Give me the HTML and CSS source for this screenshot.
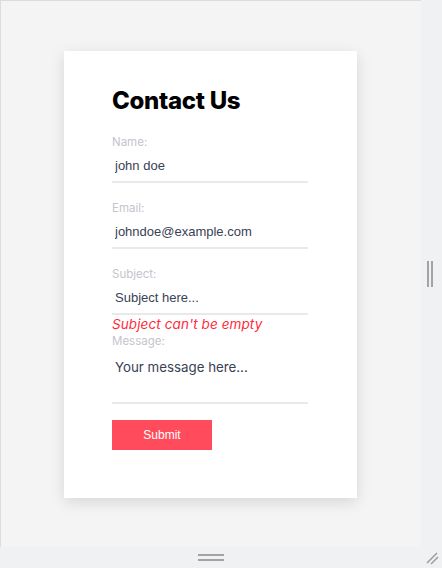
FILE: index.html
```html
<!DOCTYPE html>
<html>
<head>
<meta charset="utf-8">
<link rel="stylesheet" href="styles.css">
</head>
<body>
<div class="frame">
  <div class="viewport">
    <form class="card">
      <h1 class="title">Contact Us</h1>
      <div class="field">
        <label class="label">Name:</label>
        <input class="input" type="text" value="john doe">
      </div>
      <div class="field">
        <label class="label">Email:</label>
        <input class="input" type="text" value="johndoe@example.com">
      </div>
      <div class="field field-error">
        <label class="label">Subject:</label>
        <input class="input" type="text" value="Subject here...">
        <div class="error">Subject can't be empty</div>
      </div>
      <div class="field field-last">
        <label class="label">Message:</label>
        <textarea class="textarea" placeholder="Your message here..."></textarea>
      </div>
      <button class="submit" type="button">Submit</button>
    </form>
  </div>
  <div class="side-handle">
    <span class="grip-v"></span><span class="grip-v"></span>
  </div>
  <div class="bottom-handle">
    <span class="grip-h"></span><span class="grip-h"></span>
  </div>
  <div class="corner">
    <svg width="14" height="14" viewBox="0 0 14 14">
      <line x1="2" y1="12" x2="12" y2="2" stroke="#9a9a9a" stroke-width="1.5"/>
      <line x1="6" y1="13" x2="13" y2="6" stroke="#9a9a9a" stroke-width="1.5"/>
    </svg>
  </div>
</div>
</body>
</html>
```
FILE: styles.css
```css
* { box-sizing: border-box; }
html, body { margin: 0; padding: 0; }
body {
  width: 442px;
  height: 568px;
  background: #f0f1f3;
  font-family: "Liberation Sans", Arial, sans-serif;
}
.frame {
  display: grid;
  grid-template-columns: 421px 21px;
  grid-template-rows: 547px 21px;
  width: 442px;
  height: 568px;
}
.viewport {
  background: #f4f4f4;
  border-top: 1px solid #dcdcdc;
  border-left: 1px solid #dcdcdc;
  display: flex;
  align-items: center;
  justify-content: center;
}
.card {
  width: 293px;
  height: 447px;
  margin-left: -1px;
  background: #fff;
  box-shadow: 0 4px 14px rgba(0, 0, 0, 0.12);
  padding: 36px 48px 48px 48px;
  display: flex;
  flex-direction: column;
}
.title {
  margin: 0 0 19px 0;
  font-family: "Inter", "Noto Sans", sans-serif;
  font-weight: 800;
  font-size: 24px;
  line-height: 28px;
  color: #000;
  letter-spacing: -0.3px;
}
.field {
  display: flex;
  flex-direction: column;
  width: 196px;
  margin-bottom: 17px;
}
.field-error { margin-bottom: 0; }
.field-last { margin-bottom: 16px; }
.label {
  font-family: "Inter", "Noto Sans", sans-serif;
  font-size: 11.5px;
  line-height: 16px;
  color: #c3c5cd;
}
.input {
  height: 33px;
  border: 0;
  border-bottom: 2px solid #e9e9ea;
  padding: 0 0 0 3px;
  font-family: "Liberation Sans", Arial, sans-serif;
  font-size: 13px;
  color: #3a4155;
  outline: none;
  background: transparent;
}
.error {
  font-family: "Inter", "Noto Sans", sans-serif;
  font-style: italic;
  font-size: 13.5px;
  line-height: 18px;
  letter-spacing: 0.1px;
  color: #ff2a3a;
}
.textarea {
  height: 55px;
  border: 0;
  border-bottom: 2px solid #e9e9ea;
  padding: 10px 0 0 3px;
  resize: none;
  font-family: "Inter", "Noto Sans", sans-serif;
  font-size: 13.3px;
  color: #3a4155;
  outline: none;
  background: transparent;
}
.textarea::placeholder { color: #3a4155; opacity: 1; }
.submit {
  width: 100px;
  height: 30px;
  border: 0;
  background: #ff4b5c;
  color: #fff;
  font-family: "Liberation Sans", Arial, sans-serif;
  font-size: 12px;
  padding: 0;
}
.side-handle {
  display: flex;
  align-items: center;
  justify-content: flex-start;
  gap: 2px;
  padding-left: 6px;
  background: #f0f1f3;
}
.grip-v {
  width: 2px;
  height: 26px;
  background: #a3a3a3;
}
.bottom-handle {
  display: flex;
  flex-direction: column;
  align-items: center;
  justify-content: center;
  gap: 3px;
  background: #f0f1f3;
}
.grip-h {
  width: 26px;
  height: 2px;
  background: #a3a3a3;
}
.corner {
  display: flex;
  align-items: center;
  justify-content: center;
  background: #f0f1f3;
}
```
